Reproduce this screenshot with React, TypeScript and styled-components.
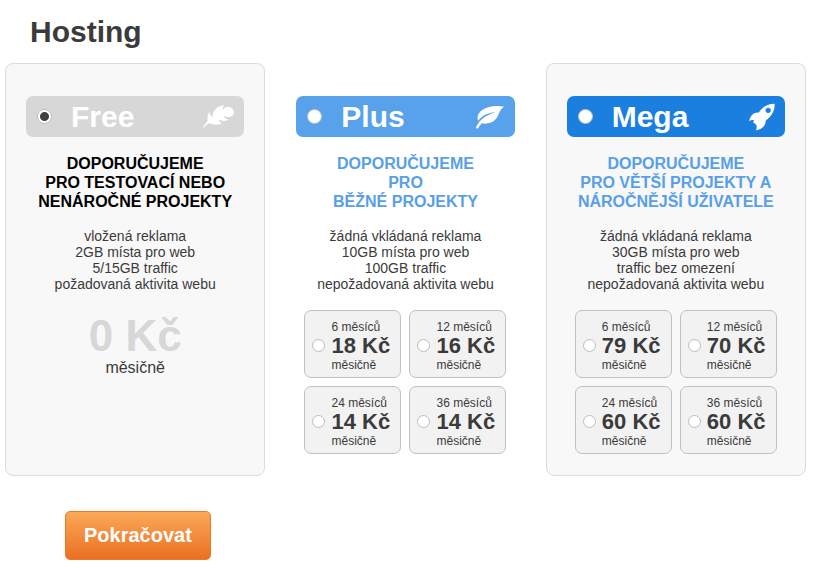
import React, { useState } from "react";
import styled, { createGlobalStyle } from "styled-components";

const GlobalStyle = createGlobalStyle`
  *, *::before, *::after { box-sizing: border-box; }
  body {
    margin: 0;
    background: #fff;
    color: #3b3b3b;
    font-family: "Liberation Sans", Arial, sans-serif;
    font-size: 14px;
  }
`;

const Page = styled.form`
  padding: 14px 15px 15px 5px;
`;

const Title = styled.h1`
  margin: 0 0 14px 25px;
  font-size: 30px;
  line-height: 35px;
  color: #3b3b3b;
`;

const Plans = styled.div`
  display: grid;
  grid-template-columns: repeat(3, minmax(240px, 1fr));
  gap: 10px;
`;

const Card = styled.section<{ $boxed: boolean }>`
  padding: 32px 20px 21px;
  border: 1px solid ${(p) => (p.$boxed ? "#dcdcdc" : "transparent")};
  border-radius: 8px;
  background: ${(p) => (p.$boxed ? "#f8f8f8" : "transparent")};
  text-align: center;
`;

const PlanHeader = styled.label<{ $color: string }>`
  display: flex;
  align-items: center;
  height: 41px;
  padding: 0 9px 0 11px;
  border-radius: 7px;
  background: ${(p) => p.$color};
  color: #fff;
  font-size: 30px;
  font-weight: bold;
  line-height: 34px;
  cursor: pointer;
`;

const PlanName = styled.span`
  flex: 1;
  margin-left: 19px;
  text-align: left;
`;

const Radio = styled.input<{ $size: number }>`
  appearance: none;
  flex: none;
  width: ${(p) => p.$size}px;
  height: ${(p) => p.$size}px;
  margin: 0;
  border: 1px solid #bdbdbd;
  border-radius: 50%;
  background: #fff;
  cursor: pointer;
  &:checked {
    background: radial-gradient(circle, #404040 4px, #fff 5px);
  }
`;

const Audience = styled.h2<{ $color: string }>`
  margin: 17px 0 17px;
  color: ${(p) => p.$color};
  font-size: 16px;
  line-height: 19px;
  white-space: pre-line;
`;

const Features = styled.ul`
  margin: 0;
  padding: 0;
  list-style: none;
  line-height: 16px;
`;

const FreePrice = styled.p`
  margin: 21px 0 0;
  font-size: 16px;
  line-height: 18px;
`;

const FreeAmount = styled.strong`
  display: block;
  color: #d7d7d7;
  font-size: 44px;
  line-height: 46px;
`;

const Options = styled.div`
  display: grid;
  grid-template-columns: repeat(2, 97px);
  justify-content: center;
  gap: 8px;
  margin-top: 18px;
`;

const Option = styled.label`
  display: flex;
  align-items: center;
  gap: 6px;
  height: 68px;
  padding: 2px 0 0 7px;
  border: 1px solid #c1c1c1;
  border-radius: 7px;
  background: #f2f2f2;
  font-size: 12px;
  line-height: 14px;
  text-align: left;
  white-space: nowrap;
  cursor: pointer;
`;

const OptionText = styled.span`
  display: block;
  padding-top: 2px;
`;

const OptionPrice = styled.strong`
  display: block;
  font-size: 22px;
  line-height: 24px;
`;

const Submit = styled.button`
  display: block;
  height: 49px;
  margin: 35px 0 0 60px;
  padding: 0 18px;
  border: 1px solid #ea7a26;
  border-radius: 5px;
  background: linear-gradient(#faa957, #ec6f23);
  color: #fff;
  font-family: inherit;
  font-size: 20px;
  font-weight: bold;
  cursor: pointer;
`;

const Icon = styled.svg`
  flex: none;
  width: 32px;
  height: 30px;
  fill: #fff;
`;

const Feather = () => (
  <Icon viewBox="39 34 96 90" aria-hidden="true">
    <path d="M39 109 C44 103 49 97 53 90 C52 80 53 70 58 63 C60 71 63 77 67 79 C67 63 80 46 102 44 C99 48 97 53 98 58 C104 49 117 46 124 51 C132 56 134 66 129 73 C123 81 109 81 101 76 C103 83 109 86 116 86 C109 93 97 92 86 86 C87 93 91 97 96 98 C83 105 68 102 58 97 C52 99 47 106 42 111 Z" />
  </Icon>
);

const Leaf = () => (
  <Icon viewBox="42 34 96 90" aria-hidden="true">
    <path d="M132 48 C112 43 78 46 62 62 C52 72 51 82 55 90 C65 76 80 67 106 65 C81 72 59 86 48 110 C48 114 52 115 55 112 C58 107 61 102 65 98 C81 101 97 97 107 86 C117 75 116 59 132 48 Z" />
  </Icon>
);

const Rocket = () => (
  <Icon viewBox="27 34 96 90" aria-hidden="true">
    <path
      fillRule="evenodd"
      d="M119 39 C98 39 83 48 71 66 C58 64 46 75 42 91 C48 88 53 87 57 89 C55 92 54 95 56 97 L61 99 C65 103 67 108 63 119 C78 117 93 106 92 90 C110 77 120 60 119 39 Z M100 51 A8 8 0 1 1 99 51 Z"
    />
  </Icon>
);

interface Plan {
  id: string;
  name: string;
  color: string;
  textColor: string;
  boxed: boolean;
  icon: React.ReactNode;
  audience: string;
  features: string[];
  prices?: [number, number][];
}

const plans: Plan[] = [
  {
    id: "free",
    name: "Free",
    color: "#d7d7d7",
    textColor: "#000",
    boxed: true,
    icon: <Feather />,
    audience: "DOPORUČUJEME\nPRO TESTOVACÍ NEBO\nNENÁROČNÉ PROJEKTY",
    features: ["vložená reklama", "2GB místa pro web", "5/15GB traffic", "požadovaná aktivita webu"],
  },
  {
    id: "plus",
    name: "Plus",
    color: "#57a2ea",
    textColor: "#57a0e8",
    boxed: false,
    icon: <Leaf />,
    audience: "DOPORUČUJEME\nPRO\nBĚŽNÉ PROJEKTY",
    features: ["žádná vkládaná reklama", "10GB místa pro web", "100GB traffic", "nepožadovaná aktivita webu"],
    prices: [[6, 18], [12, 16], [24, 14], [36, 14]],
  },
  {
    id: "mega",
    name: "Mega",
    color: "#1b7fe0",
    textColor: "#57a0e8",
    boxed: true,
    icon: <Rocket />,
    audience: "DOPORUČUJEME\nPRO VĚTŠÍ PROJEKTY A\nNÁROČNĚJŠÍ UŽIVATELE",
    features: ["žádná vkládaná reklama", "30GB místa pro web", "traffic bez omezení", "nepožadovaná aktivita webu"],
    prices: [[6, 79], [12, 70], [24, 60], [36, 60]],
  },
];

export default function App() {
  const [plan, setPlan] = useState("free");
  const [period, setPeriod] = useState("");

  return (
    <>
      <GlobalStyle />
      <Page onSubmit={(e) => e.preventDefault()}>
        <Title>Hosting</Title>
        <Plans>
          {plans.map((p) => (
            <Card key={p.id} $boxed={p.boxed}>
              <PlanHeader $color={p.color}>
                <Radio
                  $size={15}
                  type="radio"
                  name="plan"
                  checked={plan === p.id}
                  onChange={() => {
                    setPlan(p.id);
                    setPeriod("");
                  }}
                />
                <PlanName>{p.name}</PlanName>
                {p.icon}
              </PlanHeader>
              <Audience $color={p.textColor}>{p.audience}</Audience>
              <Features>
                {p.features.map((f) => (
                  <li key={f}>{f}</li>
                ))}
              </Features>
              {p.prices ? (
                <Options>
                  {p.prices.map(([months, price]) => {
                    const key = `${p.id}-${months}`;
                    return (
                      <Option key={key}>
                        <Radio
                          $size={13}
                          type="radio"
                          name="period"
                          checked={period === key}
                          onChange={() => {
                            setPlan(p.id);
                            setPeriod(key);
                          }}
                        />
                        <OptionText>
                          {months} měsíců
                          <OptionPrice>{price} Kč</OptionPrice>
                          měsičně
                        </OptionText>
                      </Option>
                    );
                  })}
                </Options>
              ) : (
                <FreePrice>
                  <FreeAmount>0 Kč</FreeAmount>
                  měsičně
                </FreePrice>
              )}
            </Card>
          ))}
        </Plans>
        <Submit type="submit">Pokračovat</Submit>
      </Page>
    </>
  );
}
